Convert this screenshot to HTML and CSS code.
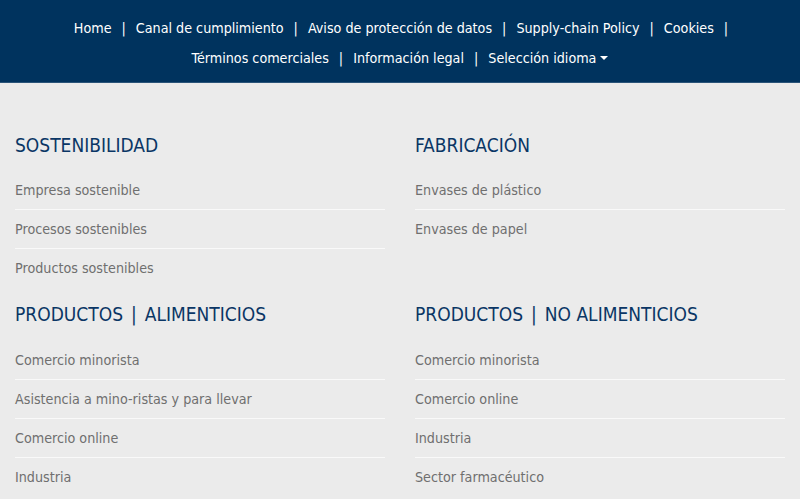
FILE: index.html
```html
<!DOCTYPE html>
<html lang="es">
<head>
<meta charset="utf-8">
<title>Footer</title>
<link rel="stylesheet" href="styles.css">
</head>
<body>
<header class="topbar">
  <nav class="topnav">
    <div class="navrow navrow-first">
      <a href="#">Home</a><span class="sep">|</span>
      <a href="#">Canal de cumplimiento</a><span class="sep">|</span>
      <a href="#">Aviso de protección de datos</a><span class="sep">|</span>
      <a href="#">Supply-chain Policy</a><span class="sep">|</span>
      <a href="#">Cookies</a><span class="sep">|</span>
    </div>
    <div class="navrow">
      <a href="#">Términos comerciales</a><span class="sep">|</span>
      <a href="#">Información legal</a><span class="sep">|</span>
      <a href="#" class="dropdown">Selección idioma<span class="caret"></span></a>
    </div>
  </nav>
</header>
<main class="sitemap">
  <section class="group">
    <h2>SOSTENIBILIDAD</h2>
    <ul>
      <li><a href="#">Empresa sostenible</a></li>
      <li><a href="#">Procesos sostenibles</a></li>
      <li><a href="#">Productos sostenibles</a></li>
    </ul>
  </section>
  <section class="group">
    <h2>FABRICACIÓN</h2>
    <ul>
      <li><a href="#">Envases de plástico</a></li>
      <li><a href="#">Envases de papel</a></li>
    </ul>
  </section>
  <section class="group">
    <h2>PRODUCTOS<span class="hsep">|</span>ALIMENTICIOS</h2>
    <ul>
      <li><a href="#">Comercio minorista</a></li>
      <li><a href="#">Asistencia a mino-ristas y para llevar</a></li>
      <li><a href="#">Comercio online</a></li>
      <li><a href="#">Industria</a></li>
    </ul>
  </section>
  <section class="group">
    <h2>PRODUCTOS<span class="hsep">|</span>NO ALIMENTICIOS</h2>
    <ul>
      <li><a href="#">Comercio minorista</a></li>
      <li><a href="#">Comercio online</a></li>
      <li><a href="#">Industria</a></li>
      <li><a href="#">Sector farmacéutico</a></li>
    </ul>
  </section>
</main>
</body>
</html>
```
FILE: styles.css
```css
html, body {
  margin: 0;
  padding: 0;
}
body {
  background: #ebebeb;
  font-family: "DejaVu Sans Condensed", "DejaVu Sans", sans-serif;
  overflow: hidden;
}
a {
  text-decoration: none;
  color: inherit;
}
.topbar {
  background: #00335e;
  border-bottom: 1px solid #2a5479;
  padding: 13px 0 9px;
}
.topnav {
  display: flex;
  flex-direction: column;
  align-items: center;
}
.navrow {
  display: flex;
  justify-content: center;
  align-items: center;
  height: 30px;
  color: #fff;
  font-size: 14.2px;
}
.navrow-first {
  padding-left: 12px;
}
.sep {
  margin: 0 10px;
}
.dropdown {
  display: inline-flex;
  align-items: center;
}
.caret {
  display: inline-block;
  width: 0;
  height: 0;
  margin-left: 4px;
  border-left: 4px solid transparent;
  border-right: 4px solid transparent;
  border-top: 4px solid #fff;
}
.sitemap {
  display: grid;
  grid-template-columns: 400px 400px;
  row-gap: 15px;
  padding-top: 50px;
}
.group {
  padding: 0 15px;
}
.group h2 {
  margin: 0 0 14px;
  font-size: 19px;
  line-height: 24px;
  font-weight: normal;
  color: #0a3665;
}
.hsep {
  margin: 0 8px;
}
.group ul {
  list-style: none;
  margin: 0;
  padding: 0;
}
.group li {
  height: 38px;
  line-height: 38px;
  font-size: 14.2px;
  color: #6f6f6f;
  border-bottom: 1px solid #f9f9f9;
}
.group li:last-child {
  border-bottom: none;
}
.group:nth-child(n+3) ul {
  padding-top: 1px;
}
```
